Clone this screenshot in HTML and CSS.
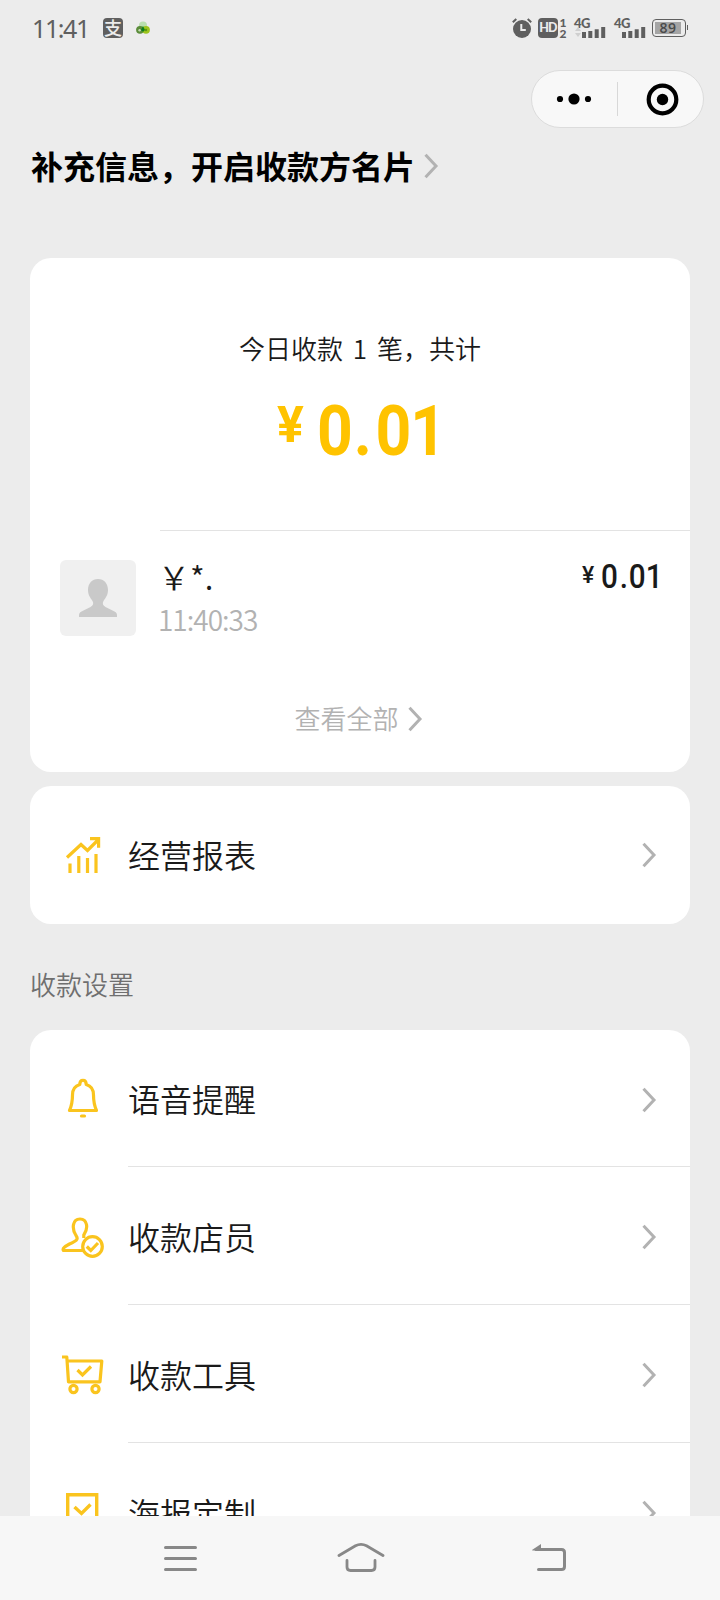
FILE: index.html
```html
<!DOCTYPE html>
<html lang="zh-CN">
<head>
<meta charset="utf-8">
<title>收款小账本</title>
<link rel="stylesheet" href="styles.css">
</head>
<body>
<svg class="defs" width="0" height="0">
  <symbol id="chevron" viewBox="0 0 16 28"><path d="M2.500 2.800 13 14 2.500 25.200" fill="none" stroke="#b2b2b2" stroke-width="3"/></symbol>
  <symbol id="bars" viewBox="0 0 24 12"><path d="M2 12V6M8.300 12V5M14.700 12V3.200M21.200 12V1" fill="none" stroke="#5f5f5f" stroke-width="4"/></symbol>
</svg>
<div class="screen">
  <header class="status">
    <span class="clock">11:41</span>
    <span class="alipay">支</span>
    <svg class="clover" width="14" height="14" viewBox="0 0 14 14"><circle cx="7" cy="4.500" r="4" fill="#b9dfae"/><circle cx="4" cy="8.800" r="3.900" fill="#5b8c3a"/><circle cx="10" cy="8.800" r="3.900" fill="#9cc41d"/><path d="M7 5l2 4-2 2-2-2z" fill="#0c7d1c"/><circle cx="3.600" cy="9.200" r="1.200" fill="#c5dcb4"/><circle cx="10" cy="9" r="1.200" fill="#5c9713"/></svg>
    <span class="grow"></span>
    <svg class="alarm" width="20" height="20" viewBox="0 0 20 20"><circle cx="10" cy="11" r="9" fill="#5f5f5f"/><path d="M.8 4.200 4.300.9M19.200 4.200 15.700.9" stroke="#5f5f5f" stroke-width="2"/><path d="M9.300 6v6h4.500" fill="none" stroke="#ececec" stroke-width="2"/></svg>
    <span class="hd">HD</span>
    <span class="sims"><span>1</span><span>2</span></span>
    <span class="signal"><span class="net">4G</span><span class="levels"><svg width="8" height="12" viewBox="0 0 8 12"><path d="M1 5 4 1l3 4zM1 7l3 4 3-4z" fill="#cfcfcf"/></svg><svg width="24" height="12"><use href="#bars"/></svg></span></span>
    <span class="signal second"><span class="net">4G</span><span class="levels"><svg width="24" height="12"><use href="#bars"/></svg></span></span>
    <span class="battery"><span class="charge">89</span></span>
  </header>

  <div class="capsule-row">
    <div class="capsule">
      <svg class="more" width="36" height="14" viewBox="0 0 36 14"><circle cx="4" cy="7" r="3.100"/><circle cx="18" cy="7" r="5.600"/><circle cx="32" cy="7" r="3.100"/></svg>
      <span class="split"></span>
      <svg class="close" width="34" height="34" viewBox="0 0 34 34"><circle cx="17.500" cy="17.500" r="13.800" fill="none" stroke="#000" stroke-width="4.200"/><circle cx="17.500" cy="17.500" r="5.700"/></svg>
    </div>
  </div>

  <h1 class="title"><span>补充信息，开启收款方名片</span><svg width="16" height="28"><use href="#chevron"/></svg></h1>

  <main class="content">
    <section class="card summary">
      <p class="caption">今日收款 <span class="count">1</span> 笔，共计</p>
      <p class="total"><span class="yen">¥</span><span class="num">0<i>.</i>01</span></p>
      <div class="record">
        <svg class="avatar" width="76" height="76" viewBox="0 0 76 76"><rect width="76" height="76" rx="6" fill="#f0f0f0"/><path d="M38 19c6 0 10 4.500 10 11 0 5-2.500 8-4.500 11-1.500 2.500-.5 4.500 2 6l9 4.500c2 1.200 2.500 2 2.500 4V57H19v-1.500c0-2 .5-2.800 2.500-4l9-4.500c2.500-1.500 3.500-3.500 2-6-2-3-4.500-6-4.500-11 0-6.500 4-11 10-11z" fill="#c9c9c9"/></svg>
        <div class="who"><span class="name">￥*.</span><span class="time">11:40:33</span></div>
        <p class="paid"><span class="yen">¥</span><span class="num">0<i>.</i>01</span></p>
      </div>
      <p class="all"><span>查看全部</span><svg width="16" height="28"><use href="#chevron"/></svg></p>
    </section>

    <section class="card">
      <div class="row">
        <svg class="icon" width="44" height="44" viewBox="0 0 44 44"><g fill="none" stroke="#fac41e" stroke-width="3.200"><path d="M6 24.500 20 11.500 26.500 17.500 37 7M29 5.700h8.600v9"/><path d="M9 40V30.500M17.800 40V23M26.500 40V25M35 40V21"/></g></svg>
        <span class="label">经营报表</span><svg class="go" width="16" height="28"><use href="#chevron"/></svg>
      </div>
    </section>

    <h2 class="section">收款设置</h2>

    <section class="card list">
      <div class="row">
        <svg class="icon" width="44" height="44" viewBox="0 0 44 44"><g fill="none" stroke="#fac41e" stroke-width="3.200" stroke-linejoin="round" stroke-linecap="round"><path d="M18.800 6.500C18.800 .8 25.200 .8 25.200 6.500C30.500 8 32.500 12 32.500 17C32.500 25 33.500 28 35.500 32.500H8.500C10.500 28 11.500 25 11.500 17C11.500 12 13.500 8 18.800 6.500z"/><path d="M20.500 38h3"/></g></svg>
        <span class="label">语音提醒</span><svg class="go" width="16" height="28"><use href="#chevron"/></svg>
      </div>
      <div class="row">
        <svg class="icon" width="44" height="44" viewBox="0 0 44 44"><g fill="none" stroke="#fac41e" stroke-width="3.200"><path d="M22 35.500H2.500C1 33.500 4 31.500 8.500 29C15 26 18 24.500 15 20.500C10.500 13.500 11.500 4 19 4S27.500 13.500 22.800 20V23"/><circle cx="31.500" cy="31.500" r="9.800"/><path d="m25.800 31.500 4 4 7.200-7.500"/></g></svg>
        <span class="label">收款店员</span><svg class="go" width="16" height="28"><use href="#chevron"/></svg>
      </div>
      <div class="row">
        <svg class="icon" width="44" height="44" viewBox="0 0 44 44"><g fill="none" stroke="#fac41e" stroke-width="3.200"><path d="M1 4H5.800L7.500 28.800H39L40.800 8H6.500" stroke-linejoin="round"/><path d="m16.500 17 5 5 8.500-8.500"/><circle cx="12.500" cy="36" r="3.600"/><circle cx="34.500" cy="36" r="3.600"/></g></svg>
        <span class="label">收款工具</span><svg class="go" width="16" height="28"><use href="#chevron"/></svg>
      </div>
      <div class="row">
        <svg class="icon" width="44" height="44" viewBox="0 0 44 44"><g fill="none" stroke="#fac41e" stroke-width="3.400"><path d="M6.700 3.700h29V39L21.500 33 6.700 39z"/><path d="m13.500 16 7 6.500 9-9"/></g></svg>
        <span class="label">海报定制</span><svg class="go" width="16" height="28"><use href="#chevron"/></svg>
      </div>
    </section>
  </main>

  <nav class="navbar">
    <svg width="48" height="32" viewBox="0 0 48 32"><path d="M9.500 5.500h30M9.500 16.500h30M9.500 27.500h30" stroke="#888" stroke-width="3" stroke-linecap="round"/></svg>
    <svg class="home" width="48" height="32" viewBox="0 0 48 32"><g fill="none" stroke="#888" stroke-width="2.800" stroke-linecap="round"><path d="M2 13.500 18.500 3.800Q24 .8 29.500 3.800L46 13.500"/><path d="M10 18.500v6.500q0 3.500 3.500 3.500h21q3.500 0 3.500-3.500v-6.500"/></g></svg>
    <svg width="48" height="32" viewBox="0 0 48 32"><path d="M14.500 27.500h23q3 0 3-3V10.500q0-3-3-3H12" fill="none" stroke="#888" stroke-width="3" stroke-linecap="round"/><path d="M8 8 17 2v6.500H8.500z" fill="#888"/></svg>
  </nav>
</div>
</body>
</html>
```
FILE: styles.css
```css
* { box-sizing: border-box; margin: 0; padding: 0; }
body { background: #ececec; font-family: "Noto Sans CJK SC", sans-serif; font-weight: 350; color: #1a1a1a; }
svg { display: block; flex: none; }
.defs { position: absolute; }
i { font-style: normal; }
.screen { width: 720px; height: 1600px; overflow: hidden; display: flex; flex-direction: column; background: #ececec; }

.status { height: 56px; flex: none; display: flex; align-items: center; padding: 0 29px 0 32px; color: #5f5f5f; }
.clock { font: 25px/30px "Noto Sans", sans-serif; letter-spacing: -1.4px; width: 71px; white-space: nowrap; }
.alipay { width: 20px; height: 20px; border-radius: 4px; background: #5f5f5f; color: #ececec; font-size: 18px; font-weight: 500; line-height: 19px; text-align: center; }
.clover { margin-left: 13px; }
.grow { flex: 1; }
.hd { margin-left: 6px; width: 20px; height: 20px; border-radius: 4px; background: #5f5f5f; color: #ececec; font: 900 12.5px/20px Lato, sans-serif; letter-spacing: -0.8px; text-align: center; }
.sims { width: 8px; margin-left: 1px; display: flex; flex-direction: column; font: 900 12px/11px Lato, sans-serif; text-align: center; }
.signal { width: 32px; height: 20px; margin-left: 7px; display: flex; flex-direction: column; justify-content: space-between; }
.signal.second { margin-left: 8px; }
.net { height: 8px; font: 900 13px/10px Lato, sans-serif; letter-spacing: -0.5px; }
.levels { display: flex; justify-content: flex-end; }
.battery { position: relative; width: 34px; height: 18px; margin: 0 5px 0 6px; padding: 2px; border: 1.5px solid #5f5f5f; border-radius: 4px; }
.battery::after { content: ""; position: absolute; right: -3px; top: 5px; width: 1.500px; height: 5px; background: #5f5f5f; }
.charge { display: block; height: 12px; width: 26px; background: #a5a5a5; color: #4a4a4a; font: 600 14px/12px "Open Sans", sans-serif; text-align: center; letter-spacing: 0.5px; }

.capsule-row { flex: none; height: 72px; padding: 14px 16px 0 0; display: flex; justify-content: flex-end; }
.capsule { width: 173px; height: 58px; border: 1px solid #dcdcdc; border-radius: 29px; background: #f8f8f8; display: flex; align-items: center; padding-left: 24px; }
.split { width: 1px; height: 34px; background: #d8d8d8; margin: 0 27px 0 25px; }

.title { flex: none; height: 130px; padding: 17px 0 0 31px; display: flex; align-items: flex-start; font-size: 32px; line-height: 40px; font-weight: 700; color: #000; }
.title svg { margin: 7px 0 0 8px; }

.content { flex: none; height: 1258px; overflow: hidden; padding: 0 30px; }
.card { background: #fff; border-radius: 21px; }
.summary { height: 514px; margin-bottom: 14px; padding-top: 70px; }
.caption { text-align: center; font-size: 26px; line-height: 40px; white-space: nowrap; }
.count { margin: 0 4px; }
.total { height: 161px; padding: 23px 0 0 247px; display: flex; color: #ffc300; font-family: Roboto, sans-serif; font-weight: 700; }
.total .yen { width: 40px; font-size: 50px; line-height: 69px; }
.total .num { font-size: 71px; line-height: 80px; letter-spacing: -1px; transform: scaleX(0.88); transform-origin: 0 0; white-space: nowrap; }
.total i { margin: 0 5px 0 2px; }
.record { position: relative; height: 106px; padding: 31px 30px 0; display: flex; }
.record::before, .list .row + .row::before { content: ""; position: absolute; top: 0; right: 0; height: 1px; background: #e3e3e3; }
.record::before { left: 130px; top: 1px; }
.who { flex: 1; margin-left: 22px; display: flex; flex-direction: column; }
.name { margin-top: -3px; font-size: 32px; line-height: 38px; }
.time { margin-top: 4px; font-size: 28px; line-height: 40px; letter-spacing: -1px; color: #b2b2b2; }
.paid { display: flex; height: 40px; width: 78px; font-family: Roboto, sans-serif; font-weight: 500; }
.paid .yen { flex: none; font-size: 23px; line-height: 31px; width: 19px; }
.paid .num { flex: none; font-size: 33px; line-height: 34px; transform: scaleX(0.9); transform-origin: 0 0; white-space: nowrap; }
.paid i { margin: 0 1px 0 2px; }
.all { padding: 63px 3px 0 0; display: flex; justify-content: center; gap: 8px; font-size: 26px; line-height: 40px; color: #b2b2b2; }
.all svg { margin-top: 7px; }
.row { position: relative; height: 138px; padding: 0 33px 0 31px; display: flex; align-items: center; }
.label { flex: 1; margin: -3px 0 0 23px; font-size: 32px; line-height: 46px; }
.list .row { padding-top: 2px; }
.list .row:first-child { height: 137px; }
.list .row + .row::before { left: 98px; top: -1px; }
.section { height: 106px; padding: 40px 0 0 0; font-size: 26px; line-height: 40px; font-weight: 350; color: #6f6f6f; }

.navbar { flex: none; height: 84px; background: #f7f7f7; display: flex; justify-content: space-between; align-items: center; padding: 0 148px 0 156px; }
.home { margin: 0 3px 0 -3px; }
```
